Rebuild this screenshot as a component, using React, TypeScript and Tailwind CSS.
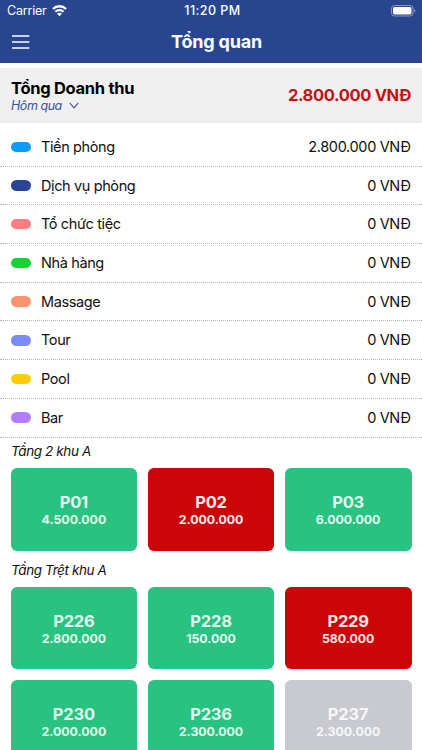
import clsx from "clsx";

type Room = { name: string; price: string; status: "free" | "busy" | "off" };

const services = [
  { name: "Tiền phòng", amount: "2.800.000", color: "bg-[#0a9bfb]" },
  { name: "Dịch vụ phòng", amount: "0", color: "bg-[#2a4593]" },
  { name: "Tổ chức tiệc", amount: "0", color: "bg-[#fd7c7d]" },
  { name: "Nhà hàng", amount: "0", color: "bg-[#12d534]" },
  { name: "Massage", amount: "0", color: "bg-[#fd9370]" },
  { name: "Tour", amount: "0", color: "bg-[#7c8bfb]" },
  { name: "Pool", amount: "0", color: "bg-[#f9cf0a]" },
  { name: "Bar", amount: "0", color: "bg-[#b07efb]" },
];

const areas: { title: string; rooms: Room[] }[] = [
  {
    title: "Tầng 2 khu A",
    rooms: [
      { name: "P01", price: "4.500.000", status: "free" },
      { name: "P02", price: "2.000.000", status: "busy" },
      { name: "P03", price: "6.000.000", status: "free" },
    ],
  },
  {
    title: "Tầng Trệt khu A",
    rooms: [
      { name: "P226", price: "2.800.000", status: "free" },
      { name: "P228", price: "150.000", status: "free" },
      { name: "P229", price: "580.000", status: "busy" },
      { name: "P230", price: "2.000.000", status: "free" },
      { name: "P236", price: "2.300.000", status: "free" },
      { name: "P237", price: "2.300.000", status: "off" },
    ],
  },
];

const StatusBar = () => (
  <div className="grid h-[21px] grid-cols-3 items-center pl-[7px] pr-[6px] pt-px text-[12.5px] leading-none text-white">
    <div className="flex items-center gap-[5px]">
      <span className="tracking-[-0.2px]">Carrier</span>
      <svg className="-mt-px" width="15" height="11.3" viewBox="0 0 16 12" fill="none" stroke="white" strokeWidth="2.5">
        <path d="M1 4.2a9.9 9.9 0 0 1 14 0" />
        <path d="M3.7 7.2a6.1 6.1 0 0 1 8.6 0" />
        <path d="M8 12 5.4 9.4a3.7 3.7 0 0 1 5.2 0z" fill="white" stroke="none" />
      </svg>
    </div>
    <span className="pl-[2px] text-center font-medium tracking-[0.45px]">11:20 PM</span>
    <svg className="-mt-px justify-self-end" width="25" height="12" viewBox="0 0 25 12">
      <rect x="0.5" y="0.5" width="21.5" height="10.5" rx="3" fill="none" stroke="white" strokeOpacity="0.45" />
      <rect x="2" y="2" width="18.5" height="7.5" rx="1.7" fill="white" />
      <path d="M23.3 4v3.8c1.5-.6 1.5-3.2 0-3.8z" fill="white" fillOpacity="0.5" />
    </svg>
  </div>
);

const RoomCard = ({ room }: { room: Room }) => (
  <div
    className={clsx(
      "flex h-[82.4px] flex-col items-center justify-center rounded-[6px] pt-[1.6px] font-bold",
      room.status === "free" && "bg-[#28c281] text-[#e3fbf0]",
      room.status === "busy" && "bg-[#ce0508] text-[#fdeaea]",
      room.status === "off" && "bg-[#c9cacf] text-[#f7f7f9]"
    )}
  >
    <p className="text-[16.5px] leading-[19px] tracking-[-0.2px]">{room.name}</p>
    <p className="text-[12.3px] leading-[15px]">{room.price}</p>
  </div>
);

const App = () => {
  return (
    <main className="h-[750px] w-full overflow-hidden bg-white font-['Inter',sans-serif] text-[#111]">
      <header className="h-[63px] bg-[#2a4590]">
        <StatusBar />
        <div className="grid h-[42px] grid-cols-3 items-center px-3">
          <svg width="18" height="14" viewBox="0 0 18 14" stroke="white" strokeWidth="1.6">
            <path d="M0 1h17.3M0 7h17.3M0 13h17.3" />
          </svg>
          <h1 className="whitespace-nowrap pl-[11px] text-center text-[18px] font-bold leading-none tracking-[-0.2px] text-white">
            Tổng quan
          </h1>
        </div>
      </header>

      <section className="mt-[5px] flex h-[55px] items-center justify-between bg-[#f0f0f0] pl-[11px] pr-[11px]">
        <div className="pt-px">
          <h2 className="text-[16.5px] font-bold leading-[19px] tracking-[-0.3px] text-black">Tổng Doanh thu</h2>
          <div className="flex items-center gap-[7px] text-[#3b53a0]">
            <span className="text-[12.5px] italic leading-[15px] tracking-[-0.45px]">Hôm qua</span>
            <svg width="10" height="7" viewBox="0 0 10 7" fill="none" stroke="currentColor" strokeWidth="1.1">
              <path d="M.7.8 5 5.8 9.3.8" />
            </svg>
          </div>
        </div>
        <span className="text-[16.5px] font-bold leading-none tracking-[-0.35px] text-[#c11216]">
          2.800.000 VNĐ
        </span>
      </section>

      <ul className="mt-[5px]">
        {services.map((service) => (
          <li
            key={service.name}
            className="flex h-[38.7px] items-center border-b border-dotted border-[#b4b4b4] pl-[10.5px] pr-[11.5px] text-[14.5px]"
          >
            <span className={clsx("mr-[10px] h-[10.5px] w-[20.5px] rounded-full", service.color)} />
            <span className="tracking-[-0.38px]">{service.name}</span>
            <span className="ml-auto tracking-[-0.35px]">{service.amount} VNĐ</span>
          </li>
        ))}
      </ul>

      {areas.map((area) => (
        <section key={area.title}>
          <h3 className="h-[25.8px] pl-[11px] pt-[3.5px] text-[13.5px] italic leading-[20px] tracking-[-0.4px]">
            {area.title}
          </h3>
          <div className="mb-[5.5px] mt-[5px] grid grid-cols-3 gap-[10.4px] px-[10.5px]">
            {area.rooms.map((room) => (
              <RoomCard key={room.name} room={room} />
            ))}
          </div>
        </section>
      ))}
    </main>
  );
};

export default App;
